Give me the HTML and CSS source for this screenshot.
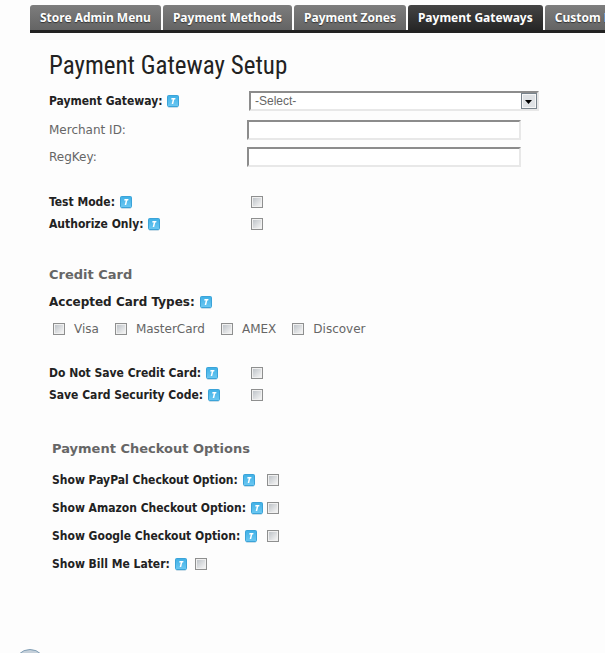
FILE: index.html
```html
<!DOCTYPE html>
<html lang="en">
<head>
    <meta charset="UTF-8">
    <meta name="viewport" content="width=device-width, initial-scale=1.0">
    <title>Payment Gateway Setup</title>
    <link rel="stylesheet" href="styles.css">
</head>
<body>
    <svg class="sprite" width="0" height="0" aria-hidden="true">
        <defs>
            <linearGradient id="info-fill" x1="0" y1="0" x2="0" y2="1">
                <stop offset="0" stop-color="#3fb0e6"/>
                <stop offset="1" stop-color="#6cc8f2"/>
            </linearGradient>
        </defs>
        <symbol id="info" viewBox="0 0 12 13">
            <rect x="1" y="11" width="10" height="2" rx="1" fill="#c9dde8"/>
            <rect x="0.5" y="0.5" width="11" height="11" rx="1" fill="url(#info-fill)" stroke="#3ba3d8"/>
            <path d="M4.500 3h4l-.3 1.500H7.300L6.200 9H4.700l1-4.500H4.200z" fill="#fff"/>
        </symbol>
    </svg>

    <nav class="tabs">
        <a href="#">Store Admin Menu</a>
        <a href="#">Payment Methods</a>
        <a href="#">Payment Zones</a>
        <a href="#" class="active">Payment Gateways</a>
        <a href="#">Custom Payments</a>
    </nav>

    <form class="setup">
        <h1>Payment Gateway Setup</h1>

        <div class="fields">
            <div class="row">
                <label class="strong" for="gateway">Payment Gateway: <svg class="info"><use href="#info"/></svg></label>
                <div class="select">
                    <select id="gateway"><option>-Select-</option></select>
                    <svg class="arrow" viewBox="0 0 16 16">
                        <rect x="0.5" y="0.5" width="15" height="15" fill="#dfe2e5" stroke="#78838c"/>
                        <rect x="1.5" y="1.5" width="13" height="13" fill="none" stroke="#f6f6f6"/>
                        <path d="M4 7h7l-3.500 4z" fill="#000"/>
                    </svg>
                </div>
            </div>
            <div class="row">
                <label for="merchant">Merchant ID:</label>
                <input type="text" id="merchant">
            </div>
            <div class="row">
                <label for="regkey">RegKey:</label>
                <input type="text" id="regkey">
            </div>
        </div>

        <div class="checks">
            <div class="row">
                <label class="strong" for="test">Test Mode: <svg class="info"><use href="#info"/></svg></label>
                <input type="checkbox" id="test">
            </div>
            <div class="row">
                <label class="strong" for="authorize">Authorize Only: <svg class="info"><use href="#info"/></svg></label>
                <input type="checkbox" id="authorize">
            </div>
        </div>

        <h2>Credit Card</h2>
        <p class="strong types">Accepted Card Types: <svg class="info"><use href="#info"/></svg></p>
        <div class="cards">
            <label><input type="checkbox">Visa</label>
            <label><input type="checkbox">MasterCard</label>
            <label><input type="checkbox">AMEX</label>
            <label><input type="checkbox">Discover</label>
        </div>

        <div class="checks">
            <div class="row">
                <label class="strong" for="nosave">Do Not Save Credit Card: <svg class="info"><use href="#info"/></svg></label>
                <input type="checkbox" id="nosave">
            </div>
            <div class="row">
                <label class="strong" for="security">Save Card Security Code: <svg class="info"><use href="#info"/></svg></label>
                <input type="checkbox" id="security">
            </div>
        </div>

        <section class="checkout">
            <h2>Payment Checkout Options</h2>
            <div class="options">
                <label class="strong" for="paypal">Show PayPal Checkout Option: <svg class="info"><use href="#info"/></svg></label>
                <input type="checkbox" id="paypal">
                <label class="strong" for="amazon">Show Amazon Checkout Option: <svg class="info"><use href="#info"/></svg></label>
                <input type="checkbox" id="amazon">
                <label class="strong" for="google">Show Google Checkout Option: <svg class="info"><use href="#info"/></svg></label>
                <input type="checkbox" id="google">
            </div>
            <div class="later">
                <label class="strong" for="later">Show Bill Me Later: <svg class="info"><use href="#info"/></svg></label>
                <input type="checkbox" id="later">
            </div>
        </section>
    </form>

    <button class="orb" type="button" aria-label="Menu"></button>
</body>
</html>
```

FILE: styles.css
```css
* {
    box-sizing: border-box;
}

body {
    margin: 0;
    padding-top: 5px;
    background: #fdfdfd;
    color: #666;
    font: 12px/16px Verdana, "DejaVu Sans", sans-serif;
    overflow-x: hidden;
}

.sprite {
    position: absolute;
}

/* Tabs */
.tabs {
    display: flex;
    gap: 2px;
    margin-left: 30px;
    border-bottom: 3px solid #222;
    overflow: hidden;
}

.tabs a {
    flex: none;
    height: 25px;
    padding: 0 10px;
    border-radius: 3px 3px 0 0;
    background: linear-gradient(#7d7d7d, #646464);
    color: #fff;
    font: bold 12px/25px "Noto Sans", sans-serif;
    text-decoration: none;
    text-shadow: 0 1px 1px #333;
}

.tabs a.active {
    background: linear-gradient(#444, #262626);
}

/* Form */
.setup {
    padding: 16px 49px 0;
}

h1 {
    margin: 0;
    color: #222;
    font: 25px/34px "Roboto Condensed", "Open Sans Condensed", Roboto, sans-serif;
}

h2 {
    margin: 0;
    color: #666;
    font: bold 13px/18px "DejaVu Sans", sans-serif;
}

.strong {
    color: #222;
    font: bold 12px/16px "DejaVu Sans Condensed", "Noto Sans", sans-serif;
    white-space: nowrap;
}

.info {
    width: 12px;
    height: 13px;
    margin-left: 1px;
    vertical-align: -3px;
}

.row {
    display: grid;
    grid-template-columns: 198px 1fr;
    align-items: center;
}

.fields {
    margin-top: 4px;
}

.fields .row {
    height: 27px;
}

.fields .row:first-child {
    margin-bottom: 2px;
}

.fields input {
    width: 274px;
    height: 20px;
    border: 2px solid #e8e8e8;
    border-top-color: #8c8c8c;
    border-left-color: #8c8c8c;
    background: #fff;
}

.select {
    position: relative;
    width: 290px;
    margin-left: 2px;
}

.select select {
    display: block;
    width: 100%;
    height: 20px;
    padding: 0 4px;
    appearance: none;
    border: 2px solid #e8e8e8;
    border-top-color: #8c8c8c;
    border-left-color: #8c8c8c;
    border-radius: 0;
    background: #fff;
    color: #666;
    font: 12px/16px "Liberation Sans", Arial, sans-serif;
}

.arrow {
    position: absolute;
    top: 2px;
    right: 2px;
    width: 16px;
    height: 16px;
    pointer-events: none;
}

input[type="checkbox"] {
    width: 12px;
    height: 12px;
    margin: 0;
    appearance: none;
    border: 1px solid #8e8f8f;
    background: linear-gradient(135deg, #bfc4c9, #f4f4f4) center / 8px 8px no-repeat #f0f0f0;
}

.checks {
    margin-top: 21px;
}

.checks .row {
    height: 22px;
}

.checks input {
    margin-left: 4px;
}

.checks + h2 {
    margin-top: 31px;
}

.types {
    margin: 10px 0 11px;
    font-family: "DejaVu Sans", sans-serif;
}

.cards {
    display: flex;
    gap: 16px;
    padding-left: 4px;
}

.cards label {
    display: flex;
    align-items: center;
    gap: 9px;
}

.cards + .checks {
    margin-top: 25px;
}

.checkout {
    margin-top: 34px;
    padding-left: 3px;
}

.options {
    display: grid;
    grid-template-columns: 215px 12px;
    grid-auto-rows: 28px;
    align-items: center;
    margin-top: 8px;
}

.later {
    display: flex;
    align-items: center;
    gap: 8px;
    height: 28px;
}

/* Corner button, mostly below the fold */
.orb {
    position: fixed;
    left: 14px;
    bottom: -28px;
    width: 32px;
    height: 32px;
    border: 1px solid #7f9db4;
    border-radius: 50%;
    background: #c5d0da;
}
```
